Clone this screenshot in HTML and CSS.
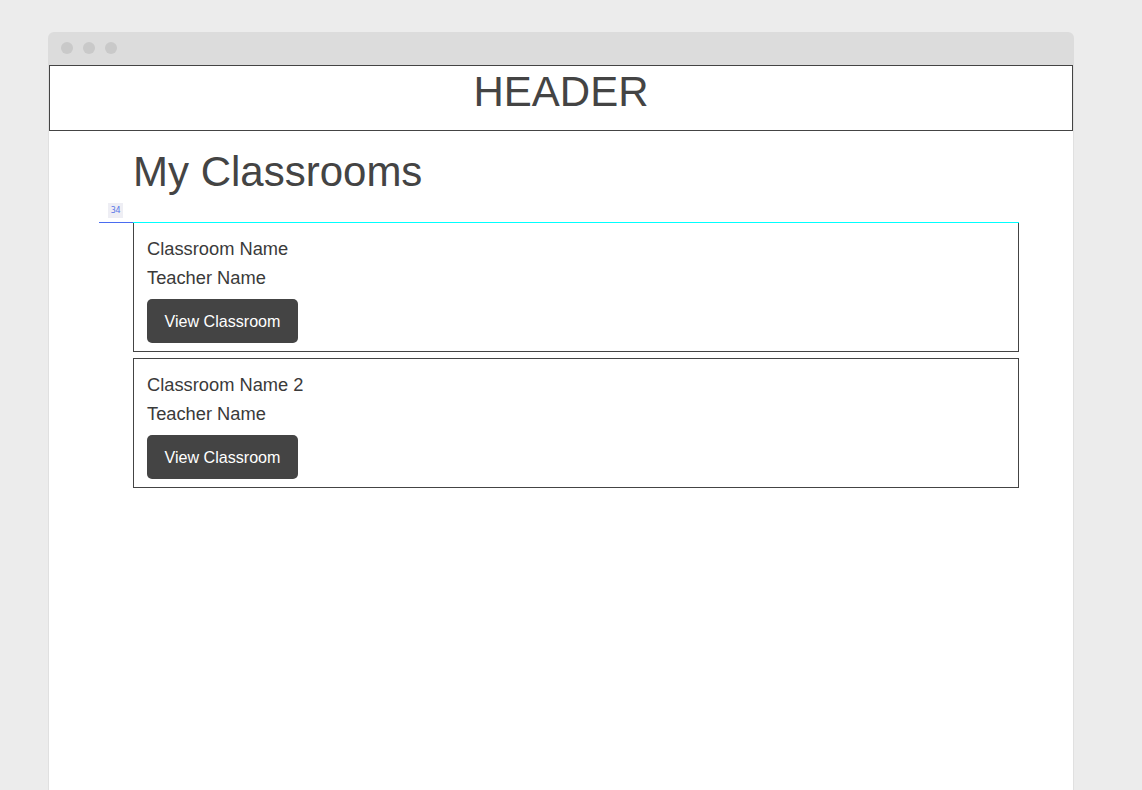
FILE: index.html
```html
<!DOCTYPE html>
<html lang="en">
<head>
<meta charset="utf-8">
<title>My Classrooms</title>
<link rel="stylesheet" href="styles.css">
</head>
<body>
  <div class="window">
    <div class="titlebar">
      <span class="dot"></span>
      <span class="dot"></span>
      <span class="dot"></span>
    </div>
    <div class="viewport">
      <header class="site-header">HEADER</header>
      <main class="content">
        <h1 class="page-title">My Classrooms</h1>
        <div class="card-list">
          <div class="measure">
            <span class="measure-label">34</span>
            <span class="measure-gap"></span>
            <span class="measure-edge"></span>
          </div>
          <div class="card">
            <div class="card-line">Classroom Name</div>
            <div class="card-line">Teacher Name</div>
            <button class="btn" type="button">View Classroom</button>
          </div>
          <div class="card">
            <div class="card-line">Classroom Name 2</div>
            <div class="card-line">Teacher Name</div>
            <button class="btn" type="button">View Classroom</button>
          </div>
        </div>
      </main>
    </div>
  </div>
</body>
</html>
```
FILE: styles.css
```css
html, body {
  margin: 0;
  padding: 0;
  height: 100%;
}

body {
  background: #ececec;
  font-family: "Liberation Sans", Arial, sans-serif;
  color: #444;
  padding: 32px 0 0 48px;
  box-sizing: border-box;
  overflow: hidden;
}

.window {
  width: 1026px;
  display: flex;
  flex-direction: column;
  min-height: 758px;
}

.titlebar {
  height: 33px;
  background: #dcdcdc;
  border-radius: 6px 6px 0 0;
  display: flex;
  align-items: center;
  gap: 10px;
  padding: 0 0 1px 13px;
  box-sizing: border-box;
}

.dot {
  width: 12px;
  height: 12px;
  border-radius: 50%;
  background: #c9c9c9;
}

.viewport {
  flex: 1;
  background: #fff;
  border-left: 1px solid #e0e0e0;
  border-right: 1px solid #e0e0e0;
}

.site-header {
  border: 1px solid #444;
  height: 66px;
  box-sizing: border-box;
  text-align: center;
  font-size: 42px;
  line-height: 47px;
  padding-top: 2px;
  color: #444;
}

.content {
  padding: 0 54px 0 84px;
}

.page-title {
  margin: 17px 0 26px;
  font-size: 42px;
  line-height: 48px;
  font-weight: normal;
  color: #444;
}

.card-list {
  position: relative;
  display: flex;
  flex-direction: column;
  gap: 6px;
}

.card {
  border: 1px solid #444;
  padding: 11px 13px 8px;
  display: flex;
  flex-direction: column;
  align-items: flex-start;
  color: #3a3a3a;
}

.card-line {
  font-size: 18.3px;
  line-height: 29px;
}

.btn {
  margin-top: 7px;
  height: 44px;
  padding: 0 17px 0 17px;
  width: 151px;
  background: #444;
  color: #fff;
  border: none;
  border-radius: 5px;
  font-family: "Liberation Sans", Arial, sans-serif;
  font-size: 16.1px;
  text-align: center;
}

.measure {
  position: absolute;
  top: 0;
  left: -34px;
  right: 0;
  height: 1px;
  display: flex;
  z-index: 2;
}

.measure-gap {
  width: 34px;
  height: 1px;
  background: #4a6cf0;
}

.measure-edge {
  flex: 1;
  height: 1px;
  background: #00ffff;
}

.measure-label {
  position: absolute;
  left: 9px;
  top: -19px;
  width: 15px;
  height: 15px;
  background: #eeeef4;
  color: #5a78e8;
  font-family: "DejaVu Sans", sans-serif;
  font-size: 8px;
  line-height: 15px;
  text-align: center;
  letter-spacing: -0.3px;
}
```
